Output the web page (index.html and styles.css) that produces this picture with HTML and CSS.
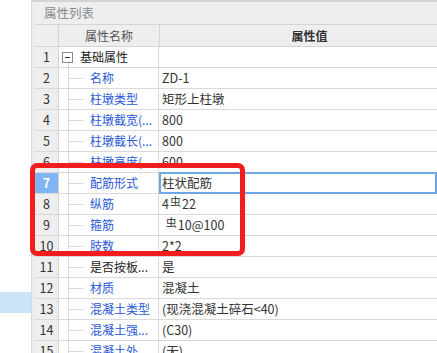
FILE: index.html
```html
<!DOCTYPE html>
<html lang="zh">
<head>
<meta charset="utf-8">
<link rel="stylesheet" href="styles.css">
</head>
<body>
<div class="app">
  <div class="left">
    <div class="left-sel"></div>
  </div>
  <div class="main">
    <div class="strip"></div>
    <div class="panel">
      <div class="title">属性列表</div>
      <div class="row head">
        <div class="num"></div>
        <div class="name hname">属性名称</div>
        <div class="val hval">属性值</div>
      </div>
      <div class="row">
        <div class="num">1</div>
        <div class="name root"><span class="minus"></span>基础属性</div>
        <div class="val"></div>
      </div>
      <div class="row"><div class="num">2</div><div class="name leaf">名称</div><div class="val">ZD-1</div></div>
      <div class="row"><div class="num">3</div><div class="name leaf">柱墩类型</div><div class="val">矩形上柱墩</div></div>
      <div class="row"><div class="num">4</div><div class="name leaf">柱墩截宽(...</div><div class="val">800</div></div>
      <div class="row"><div class="num">5</div><div class="name leaf">柱墩截长(...</div><div class="val">800</div></div>
      <div class="row"><div class="num">6</div><div class="name leaf">柱墩高度(...</div><div class="val">600</div></div>
      <div class="row"><div class="num cur">7</div><div class="name leaf">配筋形式</div><div class="val sel">柱状配筋</div></div>
      <div class="row"><div class="num">8</div><div class="name leaf">纵筋</div><div class="val">4<span class="rb">虫</span>22</div></div>
      <div class="row"><div class="num">9</div><div class="name leaf">箍筋</div><div class="val">&nbsp;<span class="rb">虫</span>10@100</div></div>
      <div class="row"><div class="num">10</div><div class="name leaf">肢数</div><div class="val">2*2</div></div>
      <div class="row"><div class="num">11</div><div class="name leaf dark">是否按板...</div><div class="val">是</div></div>
      <div class="row"><div class="num">12</div><div class="name leaf">材质</div><div class="val">混凝土</div></div>
      <div class="row"><div class="num">13</div><div class="name leaf">混凝土类型</div><div class="val">(现浇混凝土碎石&lt;40)</div></div>
      <div class="row"><div class="num">14</div><div class="name leaf">混凝土强...</div><div class="val">(C30)</div></div>
      <div class="row"><div class="num">15</div><div class="name leaf">混凝土外...</div><div class="val">(无)</div></div>
    </div>
  </div>
  <div class="mark"></div>
</div>
</body>
</html>
```

FILE: styles.css
```css
html, body {
  margin: 0;
  padding: 0;
  background: #ffffff;
}
body {
  width: 437px;
  height: 353px;
  overflow: hidden;
  font-family: "Noto Sans CJK SC", "Microsoft YaHei", "Noto Sans", sans-serif;
  font-size: 12px;
  color: #333333;
}
.app {
  position: relative;
  display: flex;
  height: 353px;
}
.left {
  width: 31px;
  border-right: 1px solid #d9d9d9;
  background: #ffffff;
  padding-top: 292px;
  box-sizing: content-box;
}
.left-sel {
  height: 21px;
  background: #cce4f7;
}
.main {
  flex: 1;
  display: flex;
  border-top: 2px solid #d2d2d8;
  min-width: 0;
}
.strip {
  width: 3px;
  background: #ececec;
}
.panel {
  flex: 1;
  min-width: 0;
  background: #ffffff;
}
.title {
  height: 22px;
  line-height: 22px;
  background: #eeeeee;
  border-bottom: 1px solid #d4d4d4;
  color: #8a8a8a;
  font-size: 12.5px;
  padding-left: 9px;
}
.row {
  display: flex;
  height: 20px;
  line-height: 20px;
  border-bottom: 1px solid #d9d9d9;
  white-space: nowrap;
}
.row.head {
  height: 21px;
  line-height: 21px;
  background: #eeeeee;
  border-bottom-color: #d4d4d4;
}
.num {
  width: 23px;
  border-right: 1px solid #d4d4d4;
  background: #eeeeee;
  text-align: center;
  color: #333333;
  font-size: 12.5px;
}
.num.cur {
  background: #7fb5f2;
  color: #ffffff;
  font-weight: bold;
}
.name {
  position: relative;
  width: 100px;
  border-right: 1px solid #d9d9d9;
  color: #2a58d6;
  overflow: hidden;
}
.val {
  position: relative;
  flex: 1;
  padding-left: 3px;
  color: #333333;
  font-size: 12.5px;
}
.hname {
  color: #555555;
  text-align: center;
  border-right-color: #d4d4d4;
}
.hval {
  text-align: center;
  padding-left: 22px;
  font-weight: bold;
  font-size: 12px;
  color: #333333;
}
.root {
  color: #222222;
  padding-left: 21px;
  box-sizing: border-box;
}
.minus {
  position: absolute;
  left: 3px;
  top: 5px;
  width: 9px;
  height: 9px;
  border: 1px solid #8a8a8a;
  background: #ffffff;
}
.minus::after {
  content: "";
  position: absolute;
  left: 2px;
  top: 4px;
  width: 5px;
  height: 1px;
  background: #333333;
}
.root::after {
  content: "";
  position: absolute;
  left: 9px;
  top: 16px;
  bottom: 0;
  width: 1px;
  background: #dcdcdc;
}
.leaf {
  padding-left: 31px;
  box-sizing: border-box;
}
.leaf::before {
  content: "";
  position: absolute;
  left: 9px;
  top: -1px;
  bottom: -1px;
  width: 1px;
  background: #dcdcdc;
}
.leaf::after {
  content: "";
  position: absolute;
  left: 9px;
  top: 10px;
  width: 15px;
  height: 1px;
  background: #dcdcdc;
}
.dark {
  color: #222222;
}
.sel::after {
  content: "";
  position: absolute;
  left: 0;
  right: 0;
  top: -1px;
  bottom: -1px;
  border: 2px solid #6ea8e2;
}
.rb {
  font-size: 11px;
  position: relative;
  top: -3px;
  margin: 0 1px;
}
.mark {
  position: absolute;
  left: 30px;
  top: 163px;
  width: 205px;
  height: 83px;
  border: 5px solid #f41c1c;
  border-radius: 7px;
}
```
